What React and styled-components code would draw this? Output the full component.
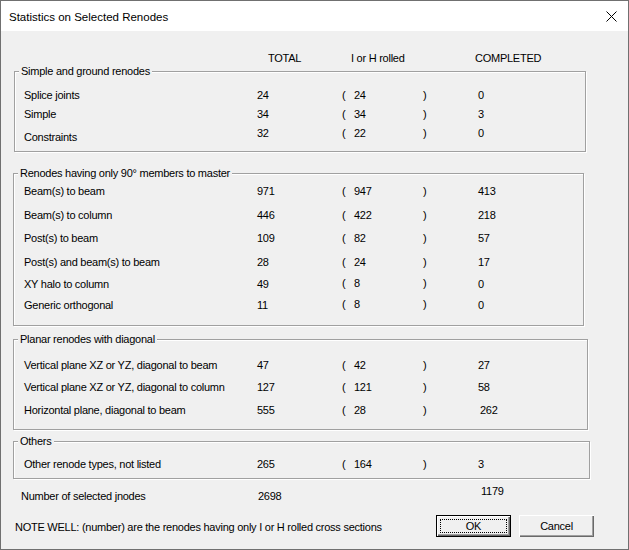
import React from 'react';
import styled, { createGlobalStyle } from 'styled-components';

const GlobalStyle = createGlobalStyle`
  html, body {
    margin: 0;
    padding: 0;
    background: #f0f0f0;
  }
  body {
    font-family: "Liberation Sans", Arial, sans-serif;
    color: #000;
  }
`;

const Window = styled.div`
  width: 629px;
  height: 550px;
  box-sizing: border-box;
  border: 1px solid #707070;
  background: #f0f0f0;
  display: flex;
  flex-direction: column;
  font-size: 11px;
  letter-spacing: -0.25px;
`;

const TitleBar = styled.div`
  height: 30px;
  flex: none;
  background: #fff;
  display: flex;
  align-items: center;
  justify-content: space-between;
  padding-left: 8px;
`;

const Title = styled.span`
  font-size: 11.5px;
  letter-spacing: 0;
  padding-top: 1px;
`;

const CloseBtn = styled.div`
  width: 34px;
  height: 30px;
  display: flex;
  align-items: center;
  justify-content: center;
`;

const Body = styled.div`
  flex: 1;
  display: flex;
  flex-direction: column;
`;

const Header = styled.div`
  display: grid;
  grid-template-columns: 83px 124px auto;
  padding: 21px 0 0 267px;
  line-height: 13px;
  margin-bottom: -1px;
`;

const pad = left => 22 - left;

const Group = styled.fieldset`
  margin: ${p => p.$top}px 0 0 ${p => p.$left}px;
  width: ${p => p.$width}px;
  box-sizing: border-box;
  padding: ${p => p.$pt}px 0 ${p => p.$pb}px ${p => pad(p.$left)}px;
  border: 1px solid #a0a0a0;
  box-shadow: 1px 1px 0 #fff, inset 1px 1px 0 #fff;
  min-width: 0;
`;

const Legend = styled.legend`
  margin-left: ${p => 4 - pad(p.$left)}px;
  padding: 0 2px;
  line-height: 14px;
  background: #f0f0f0;
`;

const Row = styled.div`
  display: grid;
  grid-template-columns: 233px 85px 12px 69px 55px auto;
  align-items: center;
  height: ${p => p.$h}px;
  line-height: 13px;
`;

const Cell = styled.span`
  margin-top: ${p => (p.$dy || 0) * 2}px;
  padding-left: ${p => p.$dx || 0}px;
`;

const TotalsRow = styled.div`
  display: grid;
  grid-template-columns: 237px 223px auto;
  align-items: start;
  margin-top: 5px;
  padding-left: 20px;
  line-height: 14px;
`;

const Shifted = styled.span`
  margin-top: ${p => p.$dy || 0}px;
`;

const BottomRow = styled.div`
  display: flex;
  align-items: center;
  margin-top: 12px;
  padding-left: 14px;
  padding-right: 34px;
  height: 22px;
`;

const Note = styled.span`
  flex: 1;
  padding-top: 1px;
`;

const Button = styled.button`
  width: 75px;
  height: 22px;
  margin-left: ${p => p.$gap || 0}px;
  padding: 0;
  box-sizing: border-box;
  font: inherit;
  font-size: 11px;
  letter-spacing: -0.25px;
  color: #000;
  background: #f0f0f0;
  border: none;
  position: relative;
  box-shadow: ${p => p.$default
    ? '0 0 0 1px #000 inset, 1px 1px 0 0 #fff inset, -1px -1px 0 0 #000 inset, 2px 2px 0 0 #fff inset, -2px -2px 0 0 #696969 inset, -3px -3px 0 0 #a0a0a0 inset'
    : '1px 1px 0 0 #fff inset, -1px -1px 0 0 #696969 inset, -2px -2px 0 0 #a0a0a0 inset'};
`;

const Focus = styled.span`
  position: absolute;
  inset: 4px;
  border: 1px dotted #000;
`;

const groups = [
  {
    title: 'Simple and ground renodes', top: 0, left: 13, width: 572, pt: 7, pb: 10,
    rows: [
      { h: 20, label: 'Splice joints', total: 24, rolled: 24, done: 0 },
      { h: 18, label: 'Simple', total: 34, rolled: 34, done: 3 },
      { h: 18, label: 'Constraints', total: 32, rolled: 22, done: 0, labelDy: 4 },
    ],
  },
  {
    title: 'Renodes having only 90° members to master', top: 14, left: 12, width: 571, pt: 0, pb: 10,
    rows: [
      { h: 23, label: 'Beam(s) to beam', total: 971, rolled: 947, done: 413 },
      { h: 24, label: 'Beam(s) to column', total: 446, rolled: 422, done: 218 },
      { h: 23, label: 'Post(s) to beam', total: 109, rolled: 82, done: 57 },
      { h: 24, label: 'Post(s) and beam(s) to beam', total: 28, rolled: 24, done: 17 },
      { h: 21, label: 'XY halo to column', total: 49, rolled: 8, done: 0, parenDy: -1 },
      { h: 20, label: 'Generic orthogonal', total: 11, rolled: 8, done: 0, parenDy: -1 },
    ],
  },
  {
    title: 'Planar renodes with diagonal', top: 6, left: 12, width: 575, pt: 8, pb: 7,
    rows: [
      { h: 22, label: 'Vertical plane XZ or YZ, diagonal to beam', total: 47, rolled: 42, done: 27 },
      { h: 22, label: 'Vertical plane XZ or YZ, diagonal to column', total: 127, rolled: 121, done: 58 },
      { h: 24, label: 'Horizontal plane, diagonal to beam', total: 555, rolled: 28, done: 262, doneDx: 2 },
    ],
  },
  {
    title: 'Others', top: 4, left: 12, width: 577, pt: 6, pb: 4,
    rows: [
      { h: 20, label: 'Other renode types, not listed', total: 265, rolled: 164, done: 3 },
    ],
  },
];

const CloseIcon = () => (
  <svg width="11" height="11" viewBox="0 0 11 11">
    <path d="M0.5 0.5 L10.5 10.5 M10.5 0.5 L0.5 10.5" stroke="#000" strokeWidth="1" fill="none" />
  </svg>
);

export default function App() {
  return (
    <>
      <GlobalStyle />
      <Window>
        <TitleBar>
          <Title>Statistics on Selected Renodes</Title>
          <CloseBtn><CloseIcon /></CloseBtn>
        </TitleBar>
        <Body>
          <Header>
            <span>TOTAL</span>
            <span>I or H rolled</span>
            <span>COMPLETED</span>
          </Header>
          {groups.map(g => (
            <Group key={g.title} $top={g.top} $left={g.left} $width={g.width} $pt={g.pt} $pb={g.pb}>
              <Legend $left={g.left}>{g.title}</Legend>
              {g.rows.map(r => (
                <Row key={r.label} $h={r.h}>
                  <Cell $dy={r.labelDy}>{r.label}</Cell>
                  <Cell>{r.total}</Cell>
                  <Cell $dy={r.parenDy}>(</Cell>
                  <Cell $dy={r.parenDy}>{r.rolled}</Cell>
                  <Cell $dy={r.parenDy}>)</Cell>
                  <Cell $dx={r.doneDx}>{r.done}</Cell>
                </Row>
              ))}
            </Group>
          ))}
          <TotalsRow>
            <Shifted $dy={5}>Number of selected jnodes</Shifted>
            <Shifted $dy={5}>2698</Shifted>
            <Shifted>1179</Shifted>
          </TotalsRow>
          <BottomRow>
            <Note>NOTE WELL: (number) are the renodes having only I or H rolled cross sections</Note>
            <Button $default>OK<Focus /></Button>
            <Button $gap={8}>Cancel</Button>
          </BottomRow>
        </Body>
      </Window>
    </>
  );
}
